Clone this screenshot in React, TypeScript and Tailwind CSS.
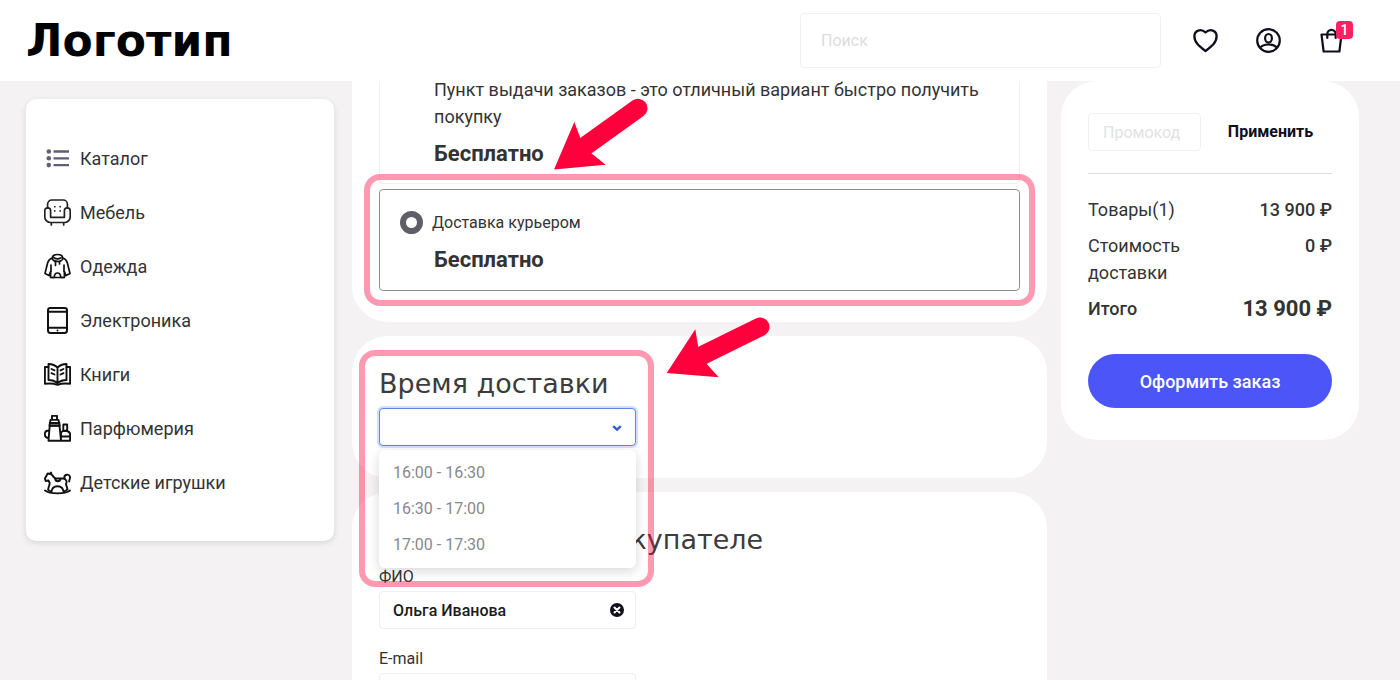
import type { ReactNode } from "react";
import React, { useState } from "react";

const categories = [
  { name: "Каталог", icon: <ListIcon /> },
  { name: "Мебель", icon: <ArmchairIcon /> },
  { name: "Одежда", icon: <HoodieIcon /> },
  { name: "Электроника", icon: <TabletIcon /> },
  { name: "Книги", icon: <BookIcon /> },
  { name: "Парфюмерия", icon: <PerfumeIcon /> },
  { name: "Детские игрушки", icon: <HorseIcon /> },
];

const slots = ["16:00 - 16:30", "16:30 - 17:00", "17:00 - 17:30"];

export default function App() {
  return (
    <div className="h-screen flex flex-col overflow-hidden bg-[#f4f2f3] text-[#333] text-lg leading-[27px] font-[Roboto,sans-serif]">
      <Header />
      <div className="flex-1 min-h-0 flex items-start overflow-hidden pl-[26px] pr-[41px]">
        <Sidebar />
        <main className="flex-1 min-w-0 flex flex-col gap-[14px] ml-[18px] mr-[14px]">
          <Delivery />
          <DeliveryTime />
          <Customer />
        </main>
        <Summary />
      </div>
    </div>
  );
}

function Header() {
  return (
    <header className="shrink-0 flex items-center h-[81px] pl-[26px] pr-[55px] bg-white text-[#0f0e1c]">
      <a
        href="#"
        className="mr-auto text-black text-[44px] leading-[54px] font-bold font-['DejaVu_Sans',sans-serif]"
      >
        Логотип
      </a>
      <input
        type="search"
        aria-label="Поиск"
        placeholder="Поиск"
        className="w-[361px] h-[55px] px-5 mr-[31px] text-base rounded border border-[#f1f0f1] placeholder:text-[#dcdcde]"
      />
      <nav className="flex gap-9">
        <a href="#" aria-label="Избранное">
          <HeartIcon />
        </a>
        <a href="#" aria-label="Профиль">
          <UserIcon />
        </a>
        <a href="#" aria-label="Корзина" className="relative">
          <BagIcon />
          <span className="absolute -top-[6px] left-[18px] w-[17px] h-[18px] rounded bg-[#fc2163] text-white text-sm leading-[18px] font-medium text-center">
            1
          </span>
        </a>
      </nav>
    </header>
  );
}

function Sidebar() {
  return (
    <nav className="w-[308px] shrink-0 mt-[18px] py-8 pl-[18px] rounded-[10px] bg-white shadow-[0_2px_6px_rgba(0,0,0,0.12)]">
      <ul>
        {categories.map((category) => (
          <li key={category.name}>
            <a href="#" className="flex items-center gap-[9px] h-[54px]">
              {category.icon}
              {category.name}
            </a>
          </li>
        ))}
      </ul>
    </nav>
  );
}

function Card({ children }: { children: ReactNode }) {
  return (
    <section className="relative px-[27px] pt-7 pb-8 rounded-[36px] bg-white">
      {children}
    </section>
  );
}

function Title({ children }: { children: ReactNode }) {
  return (
    <h2 className="text-[27px] leading-10 mb-1 whitespace-nowrap text-[#3c3c3c] font-['DejaVu_Sans',sans-serif]">
      {children}
    </h2>
  );
}

function Delivery() {
  return (
    <section className="-mt-[5px] px-[27px] pb-[31px] rounded-b-[36px] bg-white">
      <div className="pl-[54px] pr-5 pb-[15px] mb-[5px] rounded-b border border-t-0 border-[#f1f0f1]">
        <p>
          Пункт выдачи заказов - это отличный вариант быстро получить покупку
        </p>
        <Price />
      </div>
      <div className="relative pl-5 pt-[19px] pb-4 rounded border border-[#8c8c8c]">
        <label className="flex items-center gap-[9px] text-base leading-[27px]">
          <input
            type="radio"
            name="delivery"
            className="appearance-none w-[23px] h-[23px] rounded-full border-[6px] border-[#5f5e66]"
          />
          Доставка курьером
        </label>
        <div className="pl-[34px]">
          <Price />
        </div>
        <Highlight className="-inset-4" />
        <Arrow
          className="left-[172px] -top-[94px] w-[98px] h-[76px]"
          viewBox="552 96 98 76"
          head="M554 169.5 574.3 122l6.4 16.7 10.6 14.6 14.4 11.4z"
          tail="M584 147 638 108.3"
        />
      </div>
    </section>
  );
}

function Price() {
  return (
    <p className="mt-[10px] text-[22px] leading-7 font-bold">Бесплатно</p>
  );
}

function DeliveryTime() {
  const [slot, setSlot] = useState("");
  return (
    <Card>
      <Title>
        <label htmlFor="slot">Время доставки</label>
      </Title>
      <div className="relative z-10 w-[257px]">
        <select
          id="slot"
          value={slot}
          onChange={(evt) => setSlot(evt.currentTarget.value)}
          className="block appearance-none w-full h-[38px] px-[13px] text-base rounded border border-[#5f86e0] bg-white outline-none shadow-[0_0_0_2px_#d3dffb]"
        >
          <option value="" />
          {slots.map((s) => (
            <option key={s}>{s}</option>
          ))}
        </select>
        <svg
          className="absolute right-[14px] top-[15px] w-[10px] h-[10px] pointer-events-none"
          viewBox="0 0 10 10"
          fill="none"
          stroke="#2f58e0"
          strokeWidth="2.4"
        >
          <path d="M1.2 3.2 5 6.7l3.8-3.5" />
        </svg>
        <ul className="absolute top-full inset-x-0 mt-1 py-[5px] rounded-md bg-white text-base text-[#88888d] shadow-[0_3px_12px_rgba(0,0,0,0.16)]">
          {slots.map((s) => (
            <li key={s}>
              <button
                type="button"
                className="block w-full px-[14px] text-left leading-9"
                onClick={() => setSlot(s)}
              >
                {s}
              </button>
            </li>
          ))}
        </ul>
      </div>
      <Highlight className="z-20 left-[7px] top-[14px] w-[295px] h-[237px]" />
      <Arrow
        className="z-20 left-[312px] -top-[22px] w-[110px] h-[66px]"
        viewBox="664 314 110 66"
        head="M666.7 373 695.3 329.3l3 18 8.4 16.7 12 13.3z"
        tail="M700 356.500 760 327"
      />
    </Card>
  );
}

function Customer() {
  return (
    <Card>
      <Title>Информация о покупателе</Title>
      <div className="flex flex-col gap-4 w-[257px] -mt-[1px]">
        <div className="relative">
          <label htmlFor="name" className="block text-base leading-[27px]">
            ФИО
          </label>
          <input
            id="name"
            defaultValue="Ольга Иванова"
            className="block w-full h-[38px] mt-[1px] pl-[13px] pr-9 text-base font-medium text-[#1a1a1a] rounded border border-[#efeeef]"
          />
          <button
            type="button"
            aria-label="Очистить"
            className="absolute right-3 bottom-3"
          >
            <svg className="w-[14px] h-[14px]" viewBox="0 0 14 14">
              <circle cx="7" cy="7" r="7" fill="#11101c" />
              <path
                d="m4.500 4.500 5 5m0-5-5 5"
                stroke="#fff"
                strokeWidth="2"
                strokeLinecap="round"
              />
            </svg>
          </button>
        </div>
        <div>
          <label htmlFor="email" className="block text-base leading-[27px]">
            E-mail
          </label>
          <input
            id="email"
            type="email"
            className="block w-full h-[38px] mt-[1px] px-[13px] text-base rounded border border-[#efeeef]"
          />
        </div>
      </div>
    </Card>
  );
}

function Summary() {
  return (
    <aside className="w-[298px] shrink-0 px-[27px] py-8 rounded-[36px] bg-white">
      <form
        className="flex items-center pb-[22px] border-b border-[#dedede] text-base"
        onSubmit={(evt) => evt.preventDefault()}
      >
        <input
          aria-label="Промокод"
          placeholder="Промокод"
          className="w-[113px] h-[38px] px-[14px] rounded border border-[#f1f0f1] placeholder:text-[#e2e2e4]"
        />
        <button type="submit" className="flex-1 pl-2 font-bold text-[#0f0e1c]">
          Применить
        </button>
      </form>
      <dl className="flex flex-col gap-[9px] mt-[22px]">
        <div className="flex justify-between">
          <dt>Товары(1)</dt>
          <dd className="font-medium">13 900 ₽</dd>
        </div>
        <div className="flex justify-between">
          <dt className="w-[110px]">Стоимость доставки</dt>
          <dd className="font-medium">0 ₽</dd>
        </div>
        <div className="flex justify-between">
          <dt className="font-medium">Итого</dt>
          <dd className="text-[22px] font-bold">13 900 ₽</dd>
        </div>
      </dl>
      <button
        type="button"
        className="w-full h-[54px] mt-8 rounded-full bg-[#4c55f7] text-white font-medium"
      >
        Оформить заказ
      </button>
    </aside>
  );
}

function Highlight({ className }: { className: string }) {
  return (
    <div
      className={`absolute pointer-events-none rounded-[16px] border-[6px] border-[#ff003c]/40 ${className}`}
    />
  );
}

function Arrow({
  className,
  viewBox,
  head,
  tail,
}: {
  className: string;
  viewBox: string;
  head: string;
  tail: string;
}) {
  return (
    <svg
      className={`absolute pointer-events-none ${className}`}
      viewBox={viewBox}
    >
      <path d={head} fill="#ff003c" />
      <path d={tail} stroke="#ff003c" strokeWidth="19" strokeLinecap="round" />
    </svg>
  );
}

function Icon({ children }: { children: ReactNode }) {
  return (
    <svg
      className="w-[27px] h-[27px] shrink-0"
      viewBox="0 0 27 27"
      fill="none"
      stroke="currentColor"
      strokeWidth="1.7"
      strokeLinejoin="round"
      strokeLinecap="round"
    >
      {children}
    </svg>
  );
}

function HeartIcon() {
  return (
    <Icon>
      <path
        strokeWidth="2.3"
        d="M13.500 24C8 19.800 2.400 15.800 2.400 9.200 2.400 3.500 8.800 1.200 13.500 5.400 18.200 1.200 24.600 3.500 24.600 9.200c0 6.600-5.600 10.600-11.100 14.800z"
      />
    </Icon>
  );
}

function UserIcon() {
  return (
    <Icon>
      <g strokeWidth="2.2">
        <circle cx="13.500" cy="13.500" r="11.300" />
        <ellipse cx="13.500" cy="11.300" rx="3.400" ry="4.300" />
        <path d="M5.500 20.500c1.500-2.300 4.500-3 8-3s6.500.7 8 3" />
      </g>
    </Icon>
  );
}

function BagIcon() {
  return (
    <Icon>
      <path
        strokeWidth="2.2"
        d="M3.500 7.500h20l-2.100 17H5.600zM9.300 11V7a4.200 4.200 0 0 1 8.400 0v4"
      />
    </Icon>
  );
}

function ListIcon() {
  return (
    <Icon>
      <g stroke="#625e75" strokeWidth="2.300" strokeLinecap="butt">
        <path d="M9.500 6.500H25M9.500 13.300H25M9.500 20.100H25" />
      </g>
      <g fill="#625e75" stroke="none">
        <circle cx="4.800" cy="6.500" r="2.300" />
        <circle cx="4.800" cy="13.300" r="2.300" />
        <circle cx="4.800" cy="20.100" r="2.300" />
      </g>
    </Icon>
  );
}

function ArmchairIcon() {
  return (
    <Icon>
      <g stroke="#222">
        <path d="M3.600 9V5.200A4.200 4.200 0 0 1 7.800 1h11.400a4.200 4.200 0 0 1 4.200 4.200V9" />
        <path d="M6.600 18.300v-6.500a2.900 2.900 0 0 0-5.800 0V18a5.700 5.700 0 0 0 5.700 5.500h14a5.700 5.700 0 0 0 5.700-5.500v-6.200a2.900 2.900 0 0 0-5.800 0v6.500zM7.300 23.500V26M19.700 23.500V26" />
        <path d="M10.800 7.600v.1M16.200 7.600v.1M10.800 11.800v.1M16.200 11.800v.1" />
      </g>
    </Icon>
  );
}

function HoodieIcon() {
  return (
    <Icon>
      <g stroke="#111">
        <path d="M8.300 5.500C8.300 3 10.500 1.500 13.500 1.500s5.200 1.500 5.200 4c0 1.800-2.700 2.900-5.200 2.900S8.300 7.300 8.300 5.500z" />
        <path d="M10 4.800c2 1.200 5 1.200 7 0M8.300 5C5 6 4.300 7.500 3.600 10L1 20.500l4 2 1.600-4v6h3.600c.2-3 1.300-4.500 3.300-4.500s3.100 1.500 3.300 4.500h3.600v-6l1.600 4 4-2L23.400 10c-.7-2.500-1.400-4-4.700-5" />
        <path d="M7 12v6.500M20 12v6.500M11.500 8.500v4M15.500 8.500v2.500M8 24.500h11" />
      </g>
    </Icon>
  );
}

function TabletIcon() {
  return (
    <Icon>
      <g stroke="#111" strokeWidth="2">
        <rect x="4" y="1" width="19" height="25" rx="2.400" />
        <path d="M4 4.800h19M4 20.800h19M13.500 23.400v.1" />
      </g>
    </Icon>
  );
}

function BookIcon() {
  return (
    <Icon>
      <g stroke="#111" strokeWidth="1.900">
        <path d="M13.500 6.500C11 4 8 3.200 4.500 3v16c3.500 0 6.500 1 9 3.200 2.500-2.200 5.500-3.200 9-3.200V3c-3.500.2-6.500 1-9 3.500zM13.500 6.500v15.700" />
        <path d="M4.500 6H.9v16.700c4.500-.5 9-.3 12.600 1.100 3.600-1.400 8.100-1.600 12.600-1.100V6h-3.600" />
        <path d="m7.500 8 3 1.300M7.500 12.200l3 1.300M19.500 8l-3 1.300M19.500 12.200l-3 1.300" />
      </g>
    </Icon>
  );
}

function PerfumeIcon() {
  return (
    <Icon>
      <g stroke="#111" strokeWidth="1.900">
        <path d="M8 .9h5v4H8zM6.500 4.900h8l1.200 5.600H5.500zM5.700 8h9.800" />
        <path d="M5.700 10.700h9.800l1.500 15H4.500zM4.700 15.500c-5 0-5.300 7 0 7.500M17 17.500c2-2.500 7.500-2.500 9.100 1v7.200H17zM17 21.500h9.100M19.300 9.500h3.900V16h-3.900z" />
      </g>
    </Icon>
  );
}

function HorseIcon() {
  return (
    <Icon>
      <g stroke="#111" strokeWidth="1.900">
        <path d="M1 21.500c5 3.800 20 3.800 25 0M7.300 23.500c.4-4 2.700-6.300 6.200-6.300s5.800 2.300 6.200 6.300" />
        <path d="m7.200 22.500-3-1.500c-.2-3 1.500-4.200 1.500-7l-1.200-2.500-2.800.5L.9 9.500l2.800-5L6 5l1-1.500.5 2C9.500 7 9.300 9 12 9.500h7.500c3.200.5 3.500 3.500 2.500 5.500l1.500 5.500-3.500 2" />
        <path d="M11.200 9.600c.2 3.500 5 3.500 5.300 0M20.500 9.500c-1-4 4.700-5.500 5.500-1.500.3 2-1 2.500-.8 4.500" />
      </g>
    </Icon>
  );
}
